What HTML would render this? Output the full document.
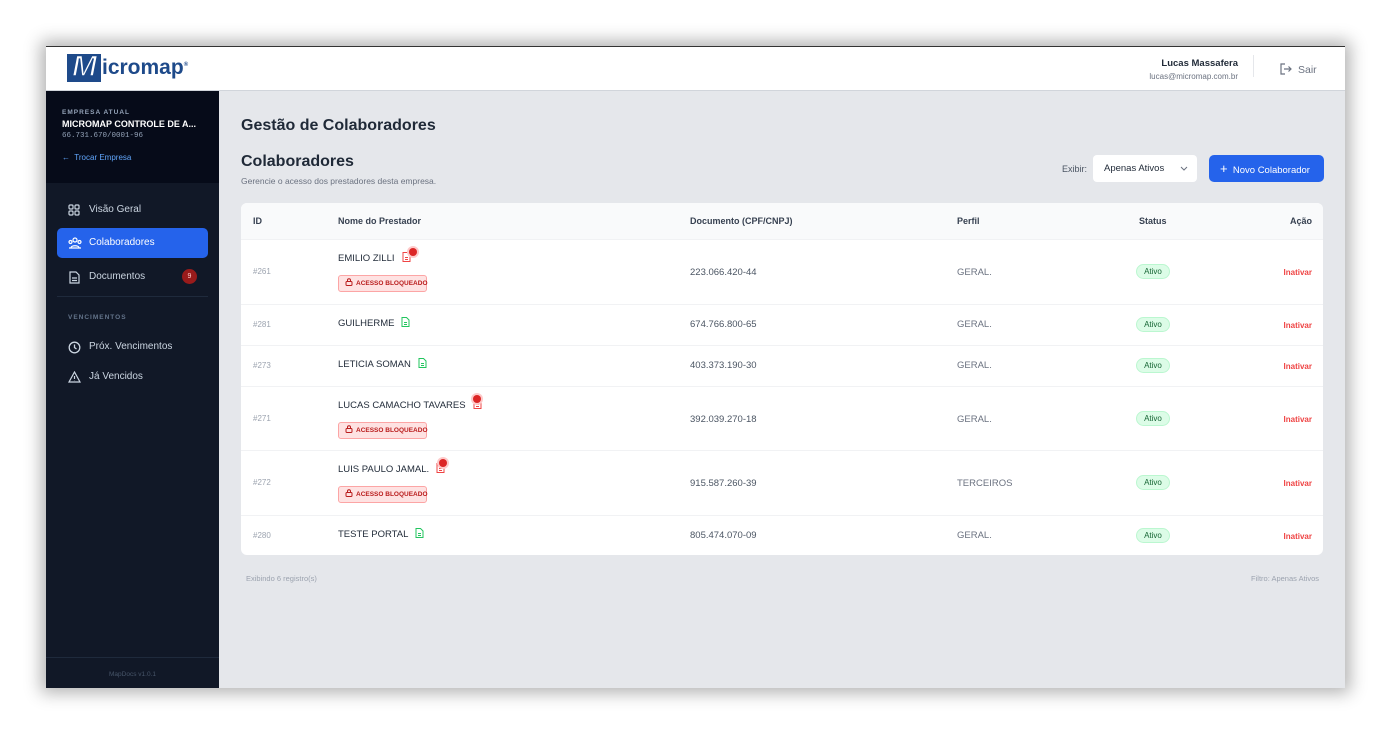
<!DOCTYPE html>
<html><head><meta charset="utf-8"><style>
*{box-sizing:border-box;margin:0;padding:0}
body{width:1391px;height:735px;background:#fff;font-family:"Liberation Sans",sans-serif;position:relative;overflow:hidden}
.win{position:absolute;left:46px;top:46px;width:1299px;height:642px;background:#e5e7eb;box-shadow:0 0 16px 5px rgba(0,0,0,.3);border-top:1px solid #333;overflow:hidden}
.hdr{position:absolute;left:0;top:0;width:1299px;height:44px;background:#fff;border-bottom:1px solid #d1d5db}
.side{position:absolute;left:0;top:44px;width:173px;height:598px;background:#111827}
.sidetop{height:92px;background:#060b19;padding:18px 16px 0}
.t{position:absolute;white-space:nowrap}
.nav{position:absolute;left:11px;width:151px;height:30px;border-radius:5px;color:#cbd5e1;font-size:10px;padding-left:32px;line-height:30px}
.nav svg{position:absolute;left:11px;top:9px}
.card{position:absolute;left:195px;top:156px;width:1082px;height:352px;background:#fff;border-radius:6px;overflow:hidden}
.row{position:absolute;left:0;width:1082px;border-top:1px solid #f1f2f4;font-size:9.5px;color:#1f2937}
.row span{white-space:nowrap}
.id{position:absolute;left:12px;color:#9ca3af;font-size:8px}
.nm{position:absolute;left:97px}
.nm svg{vertical-align:-1px;margin-left:7px}
.doc{position:absolute;left:449px;color:#4b5563}
.pf{position:absolute;left:716px;color:#6b7280}
.st{position:absolute;left:895px;background:#dcfce7;color:#166534;font-size:8px;border-radius:9px;width:34px;height:15px;line-height:13px;text-align:center;border:1px solid #bbf7d0}
.ac{position:absolute;right:11px;color:#ef4444;font-weight:bold;font-size:8px}
.blk{position:absolute;left:97px;width:89px;height:17px;background:#fee2e2;border:1px solid #fca5a5;border-radius:3px;color:#b91c1c;font-size:6.5px;font-weight:bold;line-height:15px;padding-left:6px}
.blk svg{vertical-align:-1px;margin-right:3px}
.dot{position:absolute;width:8px;height:8px;border-radius:50%;background:#dc2626;box-shadow:0 0 0 2px #fecaca}
</style></head><body>
<svg width="0" height="0" style="position:absolute"><defs>
<symbol id="fr" viewBox="0 0 9 10"><path d="M1 .5h4.5L8 3v6.5H1z M3 5.5h3M3 7.5h3" fill="none" stroke="#ef4444" stroke-width="1"/></symbol>
<symbol id="fg" viewBox="0 0 9 10"><path d="M1 .5h4.5L8 3v6.5H1z M3 5.5h3M3 7.5h3" fill="none" stroke="#22c55e" stroke-width="1"/></symbol>
<symbol id="lk" viewBox="0 0 8 8"><rect x="1" y="3.5" width="6" height="4" rx="1" fill="none" stroke="#b91c1c"/><path d="M2.5 3.5V2.3a1.5 1.5 0 0 1 3 0v1.2" fill="none" stroke="#b91c1c"/></symbol>
</defs></svg>
<div class="win">
 <div class="hdr">
  <div class="t" style="left:21px;top:7px;width:34px;height:28px;background:#1e4a8a"></div>
  <div class="t" style="left:26px;top:5px;font:italic bold 30px 'Liberation Sans';color:#fff;-webkit-text-stroke:1.5px #1e4a8a;line-height:30px">M</div>
  <div class="t" style="left:56px;top:9px;font:bold 21px 'Liberation Sans';color:#1e4a8a">icromap<sup style="font-size:6px">®</sup></div>
  <div class="t" style="right:107px;top:11px;font-size:9.5px;font-weight:bold;color:#1f2937">Lucas Massafera</div>
  <div class="t" style="right:107px;top:25px;font-size:8px;color:#6b7280">lucas@micromap.com.br</div>
  <div class="t" style="left:1207px;top:8px;width:1px;height:22px;background:#e5e7eb"></div>
  <svg class="t" style="left:1233px;top:16px" width="13" height="12" viewBox="0 0 13 12" fill="none" stroke="#6b7280" stroke-width="1.2"><path d="M6 1H2v10h4M5 6h7M9.5 3.5 12 6 9.5 8.5"/></svg>
  <div class="t" style="left:1252px;top:17px;font-size:10.5px;color:#6b7280">Sair</div>
 </div>
 <div class="side">
  <div class="sidetop">
   <div style="font-size:6.5px;color:#94a3b8;letter-spacing:1px;font-weight:bold">EMPRESA ATUAL</div>
   <div style="font-size:9px;color:#fff;font-weight:bold;margin-top:3px">MICROMAP CONTROLE DE A...</div>
   <div style="font:7.5px 'Liberation Mono';color:#94a3b8;margin-top:3px">66.731.670/0001-96</div>
   <div style="font-size:8px;color:#60a5fa;margin-top:13px">←&nbsp; Trocar Empresa</div>
  </div>
  <div class="nav" style="top:104px"><svg width="12" height="12" fill="none" stroke="#cbd5e1" stroke-width="1.2"><rect x="1" y="1" width="4" height="4" rx="1"/><rect x="7" y="1" width="4" height="4" rx="1"/><rect x="1" y="7" width="4" height="4" rx="1"/><rect x="7" y="7" width="4" height="4" rx="1"/></svg>Visão Geral</div>
  <div class="nav" style="top:137px;background:#2563eb;color:#fff"><svg width="14" height="12" fill="none" stroke="#fff" stroke-width="1.2"><circle cx="7" cy="3" r="2"/><circle cx="2.5" cy="5" r="1.5"/><circle cx="11.5" cy="5" r="1.5"/><path d="M1 11h12M3 11c0-3 8-3 8 0"/></svg>Colaboradores</div>
  <div class="nav" style="top:171px"><svg width="12" height="13" fill="none" stroke="#cbd5e1" stroke-width="1.2"><path d="M2 1h6l3 3v8H2zM4 7h5M4 9.5h5"/></svg>Documentos<span style="position:absolute;right:11px;top:7px;width:15px;height:15px;border-radius:50%;background:#991b1b;color:#fecaca;font-size:7px;text-align:center;line-height:15px">9</span></div>
  <div class="t" style="left:11px;top:205px;width:151px;height:1px;background:#1f2a3c"></div>
  <div class="t" style="left:22px;top:223px;font-size:6.5px;color:#64748b;letter-spacing:1px;font-weight:bold">VENCIMENTOS</div>
  <div class="nav" style="top:241px"><svg width="13" height="13" fill="none" stroke="#cbd5e1" stroke-width="1.3"><circle cx="6.5" cy="6.5" r="5.3"/><path d="M6.5 3.5v3l2 1.5"/></svg>Próx. Vencimentos</div>
  <div class="nav" style="top:271px"><svg width="13" height="12" fill="none" stroke="#cbd5e1" stroke-width="1.2"><path d="M6.5 1 12 11H1zM6.5 5v3M6.5 9.5v.3"/></svg>Já Vencidos</div>
  <div class="t" style="left:0;top:566px;width:173px;height:1px;background:#1f2a3c"></div>
  <div class="t" style="left:0;top:580px;width:173px;text-align:center;font-size:6.5px;color:#475569">MapDocs v1.0.1</div>
 </div>
 <div class="t" style="left:195px;top:70px;font-size:16px;font-weight:bold;color:#1f2937">Gestão de Colaboradores</div>
 <div class="t" style="left:195px;top:106px;font-size:16px;font-weight:bold;color:#1f2937">Colaboradores</div>
 <div class="t" style="left:195px;top:129px;font-size:8.5px;color:#6b7280">Gerencie o acesso dos prestadores desta empresa.</div>
 <div class="t" style="left:1016px;top:117px;font-size:9px;color:#4b5563">Exibir:</div>
 <div class="t" style="left:1047px;top:108px;width:104px;height:27px;background:#fff;border-radius:4px;font-size:9.5px;color:#1f2937;padding:8px 11px">Apenas Ativos<svg style="position:absolute;right:9px;top:11px" width="8" height="5" fill="none" stroke="#6b7280"><path d="M1 1l3 3 3-3"/></svg></div>
 <div class="t" style="left:1163px;top:108px;width:115px;height:27px;background:#2563eb;border-radius:5px;font-size:9.5px;color:#fff;line-height:27px;padding-left:11px"><span style="font-size:13px">+</span>&nbsp; Novo Colaborador</div>
 <div class="card">
  <div class="row" style="top:0;height:36px;background:#f9fafb;border:none;font-weight:bold;font-size:9px;color:#374151;line-height:36px">
   <span style="position:absolute;left:12px">ID</span><span class="nm">Nome do Prestador</span><span class="doc" style="color:#374151">Documento (CPF/CNPJ)</span><span class="pf" style="color:#374151">Perfil</span><span style="position:absolute;left:898px">Status</span><span style="position:absolute;right:11px">Ação</span>
  </div>
  <div class="row" style="top:36px;height:65px"><span class="id" style="top:27px">#261</span><span class="nm" style="top:12px">EMILIO ZILLI<svg width="9" height="10"><use href="#fr"/></svg></span><span class="dot" style="left:168px;top:8px"></span><span class="blk" style="top:35px"><svg width="8" height="8"><use href="#lk"/></svg>ACESSO BLOQUEADO</span><span class="doc" style="top:27px">223.066.420-44</span><span class="pf" style="top:27px">GERAL.</span><span class="st" style="top:24px">Ativo</span><span class="ac" style="top:28px">Inativar</span></div>
  <div class="row" style="top:101px;height:41px"><span class="id" style="top:15px">#281</span><span class="nm" style="top:12px">GUILHERME<svg width="9" height="10"><use href="#fg"/></svg></span><span class="doc" style="top:14px">674.766.800-65</span><span class="pf" style="top:14px">GERAL.</span><span class="st" style="top:12px">Ativo</span><span class="ac" style="top:16px">Inativar</span></div>
  <div class="row" style="top:142px;height:41px"><span class="id" style="top:15px">#273</span><span class="nm" style="top:12px">LETICIA SOMAN<svg width="9" height="10"><use href="#fg"/></svg></span><span class="doc" style="top:14px">403.373.190-30</span><span class="pf" style="top:14px">GERAL.</span><span class="st" style="top:12px">Ativo</span><span class="ac" style="top:16px">Inativar</span></div>
  <div class="row" style="top:183px;height:64px"><span class="id" style="top:27px">#271</span><span class="nm" style="top:12px">LUCAS CAMACHO TAVARES<svg width="9" height="10"><use href="#fr"/></svg></span><span class="dot" style="left:232px;top:8px"></span><span class="blk" style="top:35px"><svg width="8" height="8"><use href="#lk"/></svg>ACESSO BLOQUEADO</span><span class="doc" style="top:27px">392.039.270-18</span><span class="pf" style="top:27px">GERAL.</span><span class="st" style="top:24px">Ativo</span><span class="ac" style="top:28px">Inativar</span></div>
  <div class="row" style="top:247px;height:65px"><span class="id" style="top:27px">#272</span><span class="nm" style="top:12px">LUIS PAULO JAMAL.<svg width="9" height="10"><use href="#fr"/></svg></span><span class="dot" style="left:198px;top:8px"></span><span class="blk" style="top:35px"><svg width="8" height="8"><use href="#lk"/></svg>ACESSO BLOQUEADO</span><span class="doc" style="top:27px">915.587.260-39</span><span class="pf" style="top:27px">TERCEIROS</span><span class="st" style="top:24px">Ativo</span><span class="ac" style="top:28px">Inativar</span></div>
  <div class="row" style="top:312px;height:40px"><span class="id" style="top:15px">#280</span><span class="nm" style="top:12px">TESTE PORTAL<svg width="9" height="10"><use href="#fg"/></svg></span><span class="doc" style="top:14px">805.474.070-09</span><span class="pf" style="top:14px">GERAL.</span><span class="st" style="top:12px">Ativo</span><span class="ac" style="top:16px">Inativar</span></div>
 </div>
 <div class="t" style="left:200px;top:527px;font-size:7.5px;color:#9ca3af">Exibindo 6 registro(s)</div>
 <div class="t" style="right:26px;top:527px;font-size:7.5px;color:#9ca3af">Filtro: Apenas Ativos</div>
</div>
</body></html>
